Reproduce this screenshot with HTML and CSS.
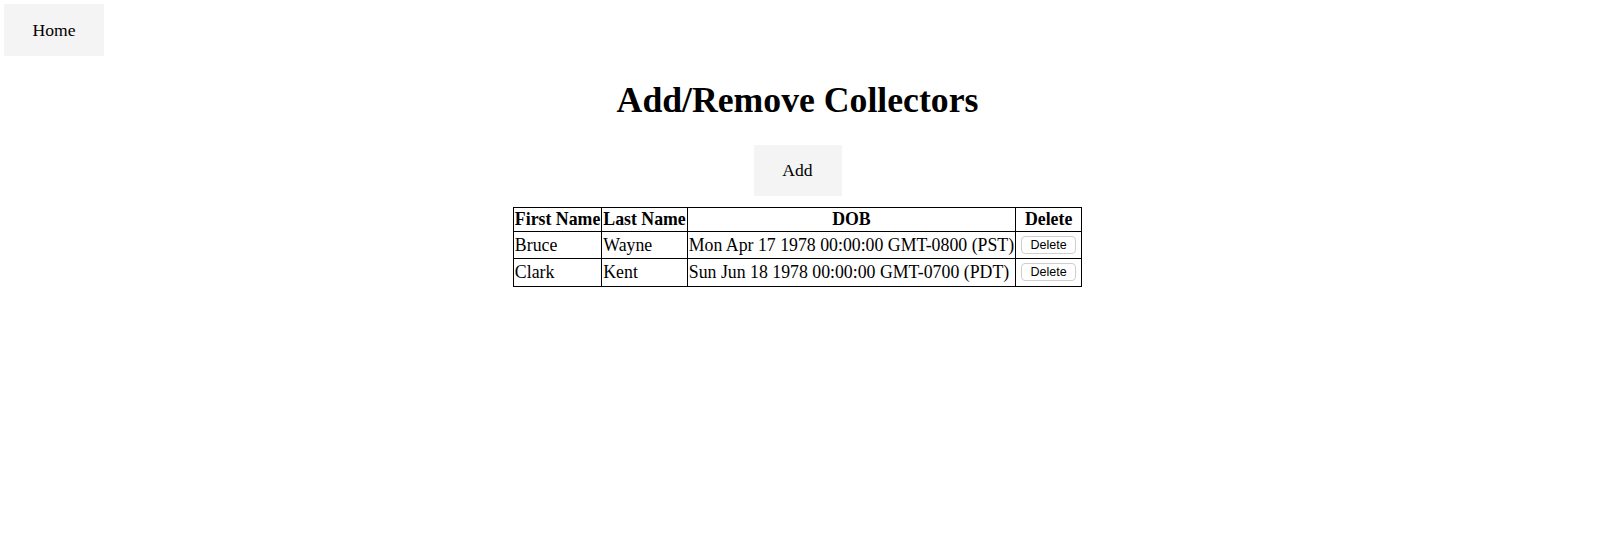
FILE: index.html
```html
<!DOCTYPE html>
<html>
<head>
<meta charset="utf-8">
<link rel="stylesheet" href="styles.css">
</head>
<body>
<div class="page">
  <nav class="nav"><button class="nav-btn">Home</button></nav>
  <main class="main">
    <h1 class="title">Add/Remove Collectors</h1>
    <button class="add-btn">Add</button>
    <table class="collectors">
      <thead>
        <tr class="head-row"><th>First Name</th><th>Last Name</th><th>DOB</th><th>Delete</th></tr>
      </thead>
      <tbody>
        <tr class="body-row"><td>Bruce</td><td>Wayne</td><td>Mon Apr 17 1978 00:00:00 GMT-0800 (PST)</td><td class="del-cell"><button class="del-btn">Delete</button></td></tr>
        <tr class="body-row"><td>Clark</td><td>Kent</td><td>Sun Jun 18 1978 00:00:00 GMT-0700 (PDT)</td><td class="del-cell"><button class="del-btn">Delete</button></td></tr>
      </tbody>
    </table>
  </main>
</div>
</body>
</html>
```
FILE: styles.css
```css
html, body {
  margin: 0;
  background: #fff;
}
body {
  font-family: "Liberation Serif", "Times New Roman", serif;
  font-size: 17.8px;
  color: #000;
}
.page {
  padding: 4px 9px 0 4px;
}
.nav {
  display: flex;
}
.nav-btn {
  width: 100px;
  height: 52px;
  border: none;
  background: #f4f4f4;
  font-family: "Liberation Serif", "Times New Roman", serif;
  font-size: 17.6px;
  color: #000;
  padding: 0;
}
.main {
  display: flex;
  flex-direction: column;
  align-items: center;
}
.title {
  font-size: 35.7px;
  font-weight: bold;
  margin: 22.5px 0 24px;
  line-height: normal;
}
.add-btn {
  width: 88px;
  height: 51px;
  border: none;
  background: #f4f4f4;
  font-family: "Liberation Serif", "Times New Roman", serif;
  font-size: 17.6px;
  color: #000;
  padding: 0;
  margin: 0 0 11px;
}
.collectors {
  border-collapse: collapse;
  border: 1px solid #777;
}
.collectors th, .collectors td {
  border: 1px solid #000;
  padding: 0 1px;
  line-height: 20px;
  white-space: nowrap;
}
.collectors th {
  font-weight: bold;
  text-align: center;
}
.collectors td {
  text-align: left;
}
.head-row {
  height: 24px;
}
.body-row {
  height: 27.5px;
}
.collectors .del-cell {
  padding: 0 5px 0 5px;
}
.del-btn {
  display: block;
  width: 55px;
  height: 18px;
  padding: 0;
  background: #fff;
  border: 1px solid #cfcfcf;
  border-radius: 4px;
  font-family: "Liberation Sans", Arial, sans-serif;
  font-size: 12.5px;
  color: #000;
}
```
